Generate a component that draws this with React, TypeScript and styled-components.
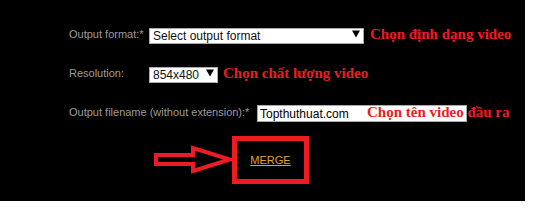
import React from 'react';
import styled, { createGlobalStyle } from 'styled-components';

const GlobalStyle = createGlobalStyle`
  body {
    margin: 0;
    background: #ffffff;
    font-family: "Liberation Sans", Arial, sans-serif;
  }
`;

const Panel = styled.div`
  width: 525px;
  height: 201px;
  box-sizing: border-box;
  background: #000000;
  padding: 24px 0 0 69px;
  display: flex;
  flex-direction: column;
  gap: 19px;
`;

const Row = styled.div`
  display: flex;
  align-items: center;
  height: 20px;
`;

const Label = styled.label<{ $width: number }>`
  width: ${({ $width }) => $width}px;
  flex-shrink: 0;
  color: #9c9c9c;
  font-size: 11px;
  white-space: nowrap;
`;

const SelectWrap = styled.div<{ $width: number }>`
  position: relative;
  width: ${({ $width }) => $width}px;
  height: 16px;
  flex-shrink: 0;
`;

const Select = styled.select`
  appearance: none;
  width: 100%;
  height: 100%;
  box-sizing: border-box;
  margin: 0;
  padding: 0 0 0 3px;
  border: 1px solid #a9a9a9;
  border-radius: 0;
  background: #ffffff;
  color: #111;
  font-family: "Liberation Sans", Arial, sans-serif;
  font-size: 12px;
  line-height: 14px;
  outline: none;
`;

const Caret = styled.span`
  position: absolute;
  right: 4px;
  top: 50%;
  transform: translateY(-50%);
  width: 0;
  height: 0;
  border-left: 4px solid transparent;
  border-right: 4px solid transparent;
  border-top: 7px solid #000;
  pointer-events: none;
`;

const Note = styled.span<{ $gap?: number }>`
  margin-left: ${({ $gap }) => $gap ?? 6}px;
  color: #ed1c24;
  font-family: "Liberation Serif", "Times New Roman", serif;
  font-weight: bold;
  font-size: 15px;
  white-space: nowrap;
`;

const InputWrap = styled.div`
  position: relative;
  width: 210px;
  height: 17px;
  flex-shrink: 0;
`;

const TextInput = styled.input`
  width: 100%;
  height: 100%;
  box-sizing: border-box;
  margin: 0;
  padding: 0 0 0 2px;
  border: 1px solid #a9a9a9;
  background: #ffffff;
  color: #000;
  font-family: "Liberation Sans", Arial, sans-serif;
  font-size: 12px;
  outline: none;
`;

const OverNote = styled(Note)`
  position: absolute;
  left: 110px;
  top: 50%;
  transform: translateY(-50%);
  margin-left: 0;
`;

const MergeRow = styled.div`
  display: flex;
  align-items: center;
  margin: -5px 0 0 81px;
`;

const Arrow = styled.svg`
  display: block;
  width: 84px;
  height: 32px;
  margin-right: -2px;
`;

const MergeBox = styled.div`
  width: 77px;
  height: 48px;
  box-sizing: border-box;
  border: 5px solid #ed1c24;
  display: flex;
  align-items: center;
  justify-content: center;
`;

const MergeLink = styled.a`
  color: #e0a526;
  font-size: 11px;
  text-decoration: underline;
  cursor: pointer;
`;

export default function App() {
  return (
    <>
      <GlobalStyle />
      <Panel>
        <Row>
          <Label $width={80}>Output format:*</Label>
          <SelectWrap $width={215}>
            <Select defaultValue="">
              <option value="">Select output format</option>
              <option value="mp4">mp4</option>
            </Select>
            <Caret />
          </SelectWrap>
          <Note>Chọn định dạng video</Note>
        </Row>
        <Row>
          <Label $width={80}>Resolution:</Label>
          <SelectWrap $width={69}>
            <Select defaultValue="854x480">
              <option value="854x480">854x480</option>
            </Select>
            <Caret />
          </SelectWrap>
          <Note $gap={5}>Chọn chất lượng video</Note>
        </Row>
        <Row>
          <Label $width={188}>Output filename (without extension):*</Label>
          <InputWrap>
            <TextInput defaultValue="Topthuthuat.com" />
            <OverNote>Chọn tên video đầu ra</OverNote>
          </InputWrap>
        </Row>
        <MergeRow>
          <Arrow viewBox="0 0 84 32">
            <polygon
              points="6,11 43,11 43,4 80,15.5 43,27 43,20 6,20"
              fill="none"
              stroke="#ed1c24"
              strokeWidth="4"
            />
          </Arrow>
          <MergeBox>
            <MergeLink>MERGE</MergeLink>
          </MergeBox>
        </MergeRow>
      </Panel>
    </>
  );
}
